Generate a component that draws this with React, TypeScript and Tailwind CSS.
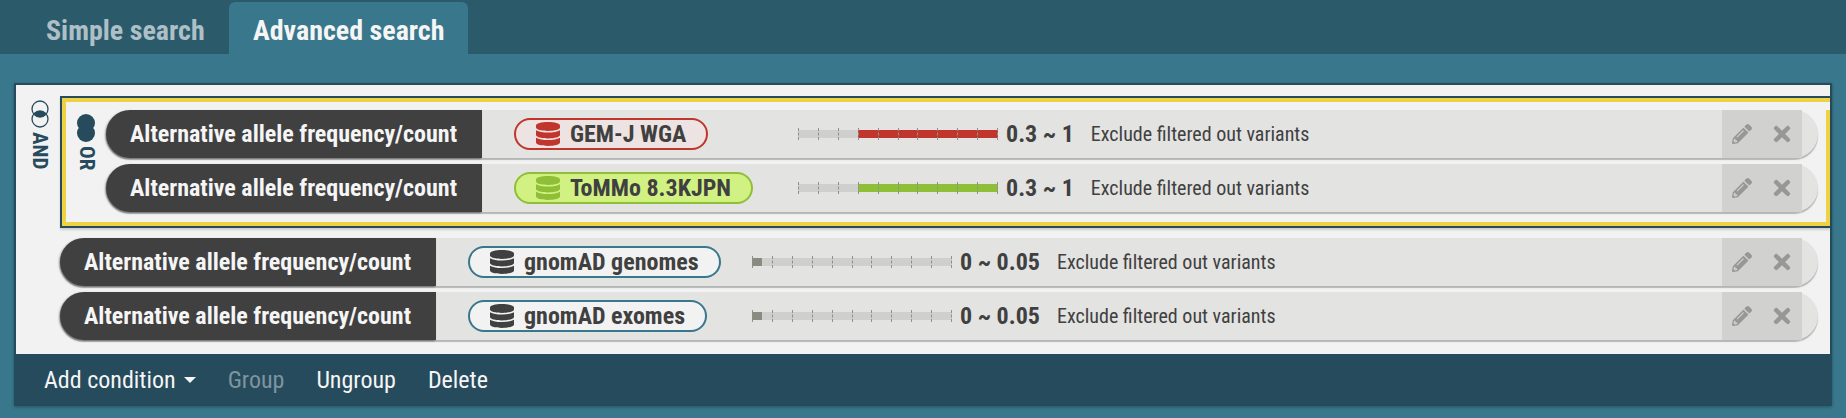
import React from 'react';
import { FaDatabase, FaPencilAlt, FaTimes } from 'react-icons/fa';

const font = 'font-["Roboto",sans-serif] [font-stretch:75%]';

type Tone = 'red' | 'green' | 'teal';

const toneClasses: Record<Tone, { pill: string; icon: string; range: string }> = {
  red: { pill: 'border-[#c0362c] bg-[#ede3e2]', icon: 'text-[#c0362c]', range: 'bg-[#c0362c]' },
  green: { pill: 'border-[#8fbf36] bg-[#d2f183]', icon: 'text-[#8fbf36]', range: 'bg-[#8fbf36]' },
  teal: { pill: 'border-[#38778c] bg-[#f2f2f2]', icon: 'text-[#404040]', range: 'bg-[#8a8a82]' },
};

const Slider: React.FC<{ tone: Tone; from: number; to: number }> = ({ tone, from, to }) => (
  <div className="relative h-[12px] w-[200px] shrink-0">
    <div className="absolute left-0 right-0 top-[2px] h-[8px] bg-[#cfcfce]" />
    <div
      className={`absolute top-[2px] h-[8px] ${toneClasses[tone].range}`}
      style={{ left: `${from * 200}px`, width: `${(to - from) * 200}px` }}
    />
    {Array.from({ length: 11 }).map((_, i) => (
      <div
        key={i}
        className="absolute top-0 h-[12px] w-px border-l border-dashed border-[#8f8f8f]"
        style={{ left: `${i * 19.9}px` }}
      />
    ))}
  </div>
);

const Row: React.FC<{
  dataset: string;
  tone: Tone;
  from: number;
  to: number;
  value: string;
  pillWidth: string;
}> = ({ dataset, tone, from, to, value, pillWidth }) => (
  <div className="flex h-[48px] rounded-[24px] bg-[#e3e3e2] shadow-[0_2px_1px_rgba(0,0,0,0.25)]">
    <div className="flex w-[376px] shrink-0 items-center rounded-l-[24px] bg-[#404040] pl-[24px] text-[24px] leading-none font-bold text-[#f5f5f5] shadow-[-1px_1px_2px_rgba(0,0,0,0.4)]">
      Alternative allele frequency/count
    </div>
    <div className="flex min-w-0 flex-1 items-center pl-[32px]">
      <div className="w-[284px] shrink-0">
        <div
          className={`flex h-[32px] items-center rounded-full border-2 pl-[20px] text-[24px] leading-none font-bold whitespace-nowrap text-[#404040] ${pillWidth} ${toneClasses[tone].pill}`}
        >
          <FaDatabase
            preserveAspectRatio="none"
            className={`mr-[10px] h-[24px] w-[24px] shrink-0 ${toneClasses[tone].icon}`}
          />
          {dataset}
        </div>
      </div>
      <Slider tone={tone} from={from} to={to} />
      <div className="mr-[17px] ml-[8px] shrink-0 text-[24px] leading-none font-bold whitespace-nowrap text-[#404040]">
        {value}
      </div>
      <div className="text-[20px] leading-none text-[#404040]">Exclude filtered out variants</div>
      <div className="ml-auto flex h-full w-[80px] shrink-0 items-center justify-between bg-[#d1d1d0] pr-[8px] pl-[10px] text-[#979797]">
        <FaPencilAlt className="h-[20px] w-[20px]" />
        <FaTimes className="h-[24px] w-[24px]" />
      </div>
    </div>
    <div className="w-[16px] shrink-0" />
  </div>
);

const AndIcon = () => (
  <svg width="18" height="28" viewBox="0 0 18 28" className="text-[#264b5c]">
    <clipPath id="andClip">
      <circle cx="9" cy="9" r="8" />
    </clipPath>
    <circle cx="9" cy="19" r="8" fill="currentColor" clipPath="url(#andClip)" />
    <circle cx="9" cy="9" r="8" fill="none" stroke="currentColor" strokeWidth="1.3" />
    <circle cx="9" cy="19" r="8" fill="none" stroke="currentColor" strokeWidth="1.3" />
  </svg>
);

const OrIcon = () => (
  <svg width="18" height="28" viewBox="0 0 18 28" className="text-[#264b5c]">
    <circle cx="9" cy="9" r="9" fill="currentColor" />
    <circle cx="9" cy="19" r="9" fill="currentColor" />
  </svg>
);

const Logic: React.FC<{ label: string; children: React.ReactNode }> = ({ label, children }) => (
  <div className="flex flex-col items-center text-[#264b5c]">
    {children}
    <span className="mt-[4px] text-[21px] leading-none font-bold [writing-mode:vertical-rl]">{label}</span>
  </div>
);

export default function App() {
  return (
    <div className={`h-[418px] w-[1846px] overflow-hidden bg-[#38778c] ${font}`}>
      <div className="flex h-[54px] items-end bg-[#2b5a6b] pl-[23px]">
        <div className="flex h-[52px] w-[206px] items-center pt-[6px] pl-[23px] text-[28px] font-bold text-[#adc0c7]">
          Simple search
        </div>
        <div className="flex h-[52px] w-[239px] items-center rounded-t-[6px] bg-[#38778c] pt-[6px] pl-[24px] text-[28px] font-bold text-[#f5f5f5]">
          Advanced search
        </div>
      </div>

      <div className="mt-[29px] ml-[14px] w-[1818px] shadow-[0_1px_3px_rgba(0,0,0,0.3)]">
        <div className="flex h-[271px] border-x-2 border-t-2 border-[#264b5c] bg-[#f2f2f2] pt-[11px]">
          <div className="flex w-[44px] shrink-0 justify-center pt-[4px] pl-[3px]">
            <Logic label="AND">
              <AndIcon />
            </Logic>
          </div>
          <div className="flex min-w-0 flex-1 flex-col">
            <div className="flex h-[132px] border-y-2 border-l-2 border-[#264b5c] shadow-[0_2px_2px_rgba(0,0,0,0.15)]">
              <div className="flex min-w-0 flex-1 border-y-4 border-l-4 border-[#efd244] pt-[8px]">
                <div className="flex w-[40px] shrink-0 justify-center pt-[4px]">
                  <Logic label="OR">
                    <OrIcon />
                  </Logic>
                </div>
                <div className="flex min-w-0 flex-1 flex-col gap-[6px]">
                  <Row dataset="GEM-J WGA" tone="red" from={0.3} to={1} value="0.3 ~ 1" pillWidth="w-[194px]" />
                  <Row dataset="ToMMo 8.3KJPN" tone="green" from={0.3} to={1} value="0.3 ~ 1" pillWidth="w-[239px]" />
                </div>
                <div className="w-[12px] shrink-0 border-r-4 border-[#efd244]" />
              </div>
            </div>
            <div className="mt-[10px] flex flex-col gap-[6px] pr-[12px]">
              <Row dataset="gnomAD genomes" tone="teal" from={0} to={0.05} value="0 ~ 0.05" pillWidth="w-[253px]" />
              <Row dataset="gnomAD exomes" tone="teal" from={0} to={0.05} value="0 ~ 0.05" pillWidth="w-[239px]" />
            </div>
          </div>
        </div>
        <div className="flex h-[52px] items-center gap-[32px] bg-[#264b5c] pl-[30px] text-[24px] leading-none text-[#f5f5f5]">
          <span className="flex items-center">
            Add condition
            <span className="ml-[8px] h-0 w-0 border-x-[6px] border-t-[6px] border-x-transparent border-t-[#f5f5f5]" />
          </span>
          <span className="text-[#7d959f]">Group</span>
          <span>Ungroup</span>
          <span>Delete</span>
        </div>
      </div>
    </div>
  );
}
